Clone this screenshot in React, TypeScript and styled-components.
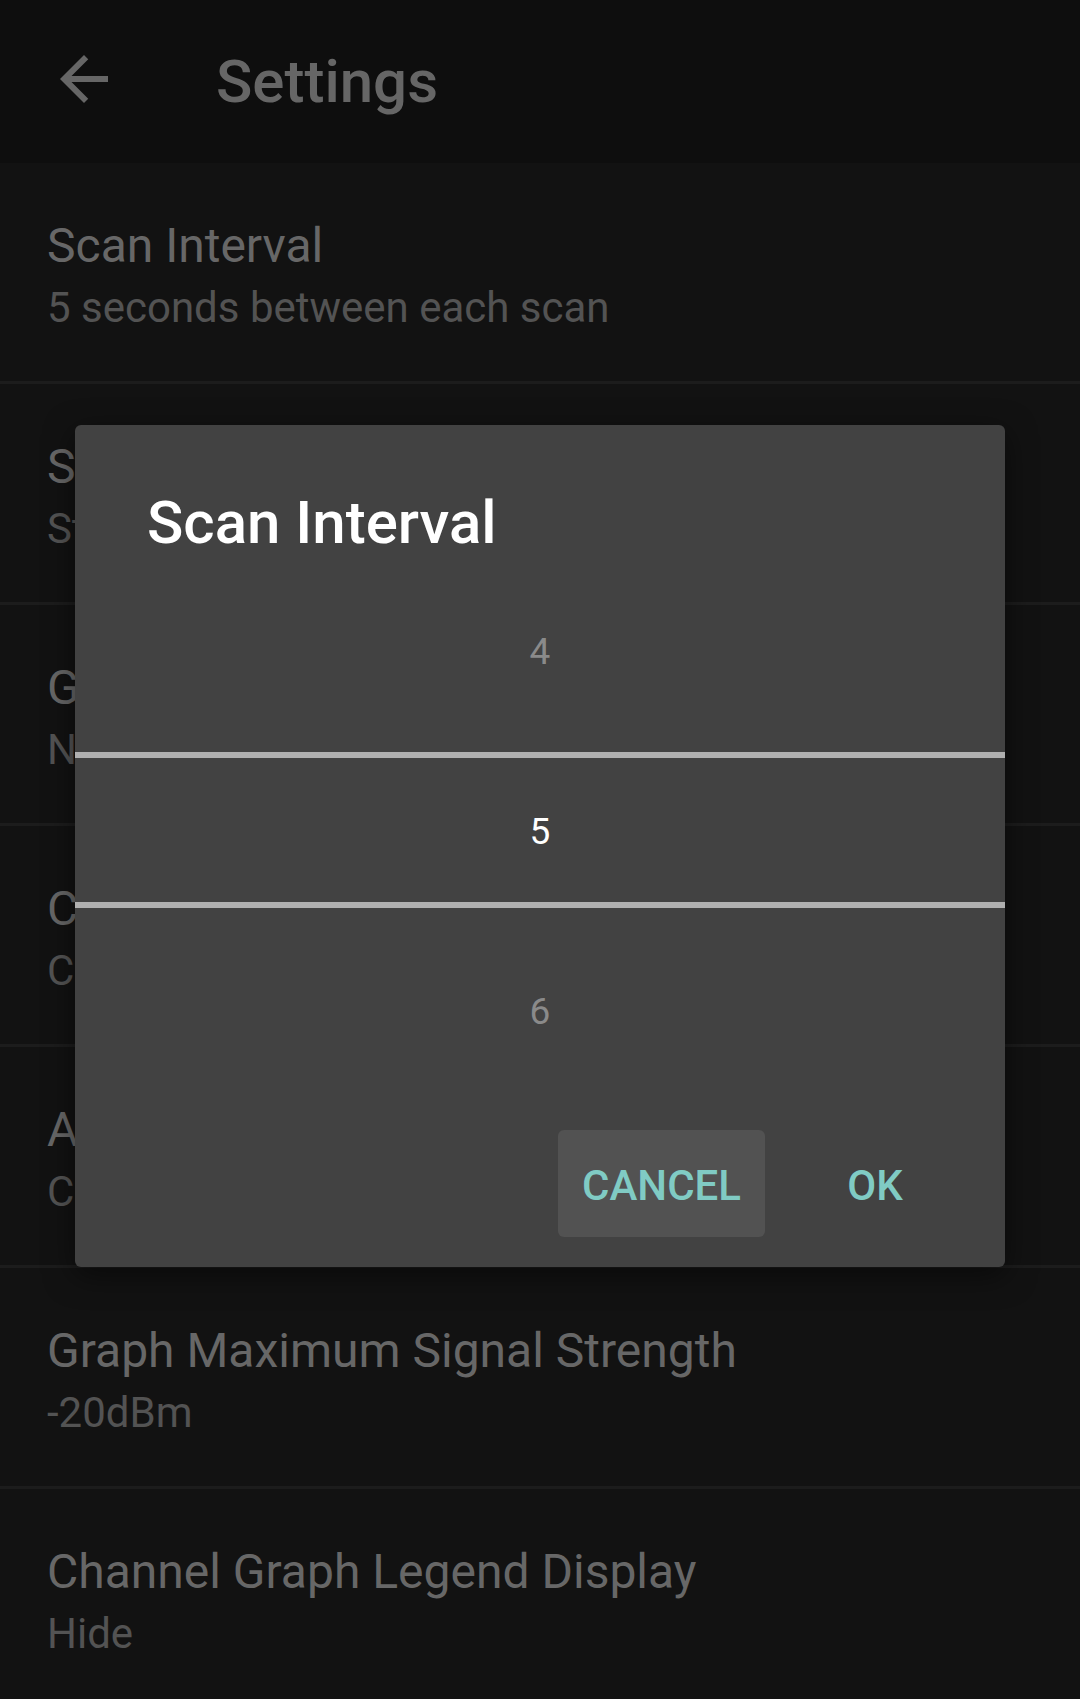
import React from "react";
import styled, { createGlobalStyle } from "styled-components";

const GlobalStyle = createGlobalStyle`
  html, body {
    margin: 0;
    padding: 0;
    background: #121212;
  }
  body {
    font-family: Roboto, "Noto Sans", "Liberation Sans", sans-serif;
    -webkit-font-smoothing: antialiased;
  }
  * { box-sizing: border-box; }
`;

const Screen = styled.div`
  position: relative;
  width: 1080px;
  height: 1699px;
  overflow: hidden;
  background: #121212;
`;

const AppBar = styled.header`
  height: 163px;
  background: #0e0e0e;
  display: flex;
  align-items: center;
  padding-left: 48px;
`;

const BackButton = styled.div`
  width: 72px;
  height: 72px;
  display: flex;
  align-items: center;
  justify-content: center;
  margin-top: -5px;
  color: #666666;
`;

const AppTitle = styled.h1`
  margin: 0 0 0 96px;
  font-size: 60px;
  font-weight: 500;
  color: #666666;
`;

const List = styled.div`
  display: flex;
  flex-direction: column;
`;

const Item = styled.div`
  height: 221px;
  padding: 51px 47px 0;
  border-bottom: 3px solid #1c1c1c;
  display: flex;
  flex-direction: column;
`;

const ItemTitle = styled.div`
  font-size: 48px;
  line-height: 64px;
  color: #676767;
  white-space: nowrap;
`;

const ItemSummary = styled.div`
  font-size: 42px;
  line-height: 60px;
  color: #535353;
  white-space: nowrap;
`;

const Dialog = styled.div`
  position: absolute;
  left: 75px;
  top: 425px;
  width: 930px;
  height: 842px;
  background: #424242;
  border-radius: 6px;
  box-shadow: 0 8px 30px rgba(0, 0, 0, 0.5);
  display: flex;
  flex-direction: column;
`;

const DialogTitle = styled.h2`
  margin: 0;
  padding: 62px 72px 0;
  font-size: 60px;
  line-height: 72px;
  font-weight: 500;
  color: #ffffff;
`;

const Picker = styled.div`
  position: relative;
  display: flex;
  flex-direction: column;
  margin-top: 2px;
`;

const PickerRow = styled.div<{ $selected?: boolean }>`
  height: 180px;
  display: flex;
  align-items: center;
  justify-content: center;
  font-size: 37px;
  line-height: 1;
  color: ${(p) => (p.$selected ? "#ffffff" : "#8a8a8a")};
`;

const SelectionLine = styled.div<{ $top: number }>`
  position: absolute;
  left: 0;
  right: 0;
  top: ${(p) => p.$top}px;
  height: 6px;
  background: #b0b0b0;
`;

const ButtonBar = styled.div`
  display: flex;
  justify-content: flex-end;
  gap: 14px;
  padding: 29px 34px 0 0;
`;

const TextButton = styled.button<{ $focused?: boolean }>`
  height: 107px;
  min-width: 192px;
  padding: 3px 24px 0;
  border: none;
  border-radius: 6px;
  background: ${(p) => (p.$focused ? "#525252" : "transparent")};
  color: #80cbc4;
  font-family: Roboto, "Noto Sans", "Liberation Sans", sans-serif;
  font-size: 42px;
  font-weight: 500;
  letter-spacing: 0;
  text-transform: uppercase;
`;

const BackArrow = () => (
  <svg width="72" height="72" viewBox="0 0 24 24" fill="currentColor">
    <path d="M20 11H7.83l5.59-5.59L12 4l-8 8 8 8 1.41-1.41L7.83 13H20v-2z" />
  </svg>
);

const settings = [
  { title: "Scan Interval", summary: "5 seconds between each scan" },
  { title: "Sort By", summary: "Strength" },
  { title: "Group By", summary: "None" },
  { title: "Connection View", summary: "Complete" },
  { title: "Access Point View", summary: "Complete" },
  { title: "Graph Maximum Signal Strength", summary: "-20dBm" },
  { title: "Channel Graph Legend Display", summary: "Hide" },
];

export default function App() {
  return (
    <>
      <GlobalStyle />
      <Screen>
        <AppBar>
          <BackButton>
            <BackArrow />
          </BackButton>
          <AppTitle>Settings</AppTitle>
        </AppBar>
        <List>
          {settings.map((s) => (
            <Item key={s.title}>
              <ItemTitle>{s.title}</ItemTitle>
              <ItemSummary>{s.summary}</ItemSummary>
            </Item>
          ))}
        </List>
        <Dialog>
          <DialogTitle>Scan Interval</DialogTitle>
          <Picker>
            <PickerRow>4</PickerRow>
            <PickerRow $selected>5</PickerRow>
            <PickerRow>6</PickerRow>
            <SelectionLine $top={191} />
            <SelectionLine $top={341} />
          </Picker>
          <ButtonBar>
            <TextButton $focused>Cancel</TextButton>
            <TextButton>OK</TextButton>
          </ButtonBar>
        </Dialog>
      </Screen>
    </>
  );
}
